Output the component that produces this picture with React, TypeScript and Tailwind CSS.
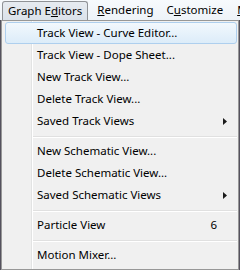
import { ReactNode } from "react";

type Entry =
	| { kind: "item"; label: ReactNode; shortcut?: string; submenu?: boolean; active?: boolean }
	| { kind: "sep" };

const entries: Entry[] = [
	{ kind: "item", label: "Track View - Curve Editor...", active: true },
	{ kind: "item", label: "Track View - Dope Sheet..." },
	{ kind: "item", label: "New Track View..." },
	{ kind: "item", label: "Delete Track View..." },
	{ kind: "item", label: "Saved Track Views", submenu: true },
	{ kind: "sep" },
	{ kind: "item", label: "New Schematic View..." },
	{ kind: "item", label: "Delete Schematic View..." },
	{ kind: "item", label: "Saved Schematic Views", submenu: true },
	{ kind: "sep" },
	{ kind: "item", label: "Particle View", shortcut: "6" },
	{ kind: "sep" },
	{ kind: "item", label: "Motion Mixer..." },
];

function MenuRow({ entry }: { entry: Entry }) {
	if (entry.kind === "sep") {
		return (
			<div className="h-[8px] pl-[30px] pr-[1px] pt-[4px]">
				<div className="h-px bg-[#e0e0e0]" />
				<div className="h-px bg-white" />
			</div>
		);
	}
	return (
		<div className="relative h-[22px] flex items-center whitespace-nowrap">
			{entry.active && (
				<div className="absolute left-[2px] right-[1px] top-0 bottom-0 rounded-[3px] border border-[#aecfee] bg-gradient-to-b from-[#f2f8fd] to-[#dcecf9]" />
			)}
			<span className="relative pl-[34px] flex-1">{entry.label}</span>
			{entry.shortcut && <span className="relative mr-[21px]">{entry.shortcut}</span>}
			{entry.submenu && (
				<svg className="relative mr-[11px]" width="4" height="7" viewBox="0 0 4 7">
					<path d="M0 0 L4 3.5 L0 7 Z" fill="#1a1a1a" />
				</svg>
			)}
		</div>
	);
}

export default function App() {
	return (
		<div className="w-[240px] h-[270px] overflow-hidden bg-[#55525e] font-['Noto_Sans',sans-serif] text-[11.5px] text-black leading-none">
			<div className="h-[20px] overflow-hidden whitespace-nowrap bg-gradient-to-b from-[#f7fafd] to-[#eef3f8] flex items-start">
				<div className="shrink-0 ml-[2px] mt-[1px] h-[19px] px-[5px] flex items-center rounded-t-[3px] border border-b-0 border-[#8f9296] bg-gradient-to-b from-[#e6ebf0] to-[#dbe2ea]">
					<span>
						Graph E<span className="underline">d</span>itors
					</span>
				</div>
				<div className="shrink-0 ml-[9px] h-[20px] flex items-center">
					<span>
						<span className="underline">R</span>endering
					</span>
				</div>
				<div className="shrink-0 ml-[13px] h-[20px] flex items-center">
					<span>
						C<span className="underline">u</span>stomize
					</span>
				</div>
				<div className="shrink-0 ml-[14px] h-[20px] flex items-center">
					<span className="underline">M</span>
				</div>
			</div>
			<div className="ml-[1px] w-[238px] h-[250px] border border-[#979797] bg-[#f0f0f0] pt-[1px] pl-[1px] relative">
				<div className="absolute left-[29px] top-0 bottom-0 w-px bg-[#e2e3e3]" />
				<div className="absolute left-[30px] top-0 bottom-0 w-px bg-white" />
				{entries.map((e, i) => (
					<MenuRow key={i} entry={e} />
				))}
			</div>
		</div>
	);
}
